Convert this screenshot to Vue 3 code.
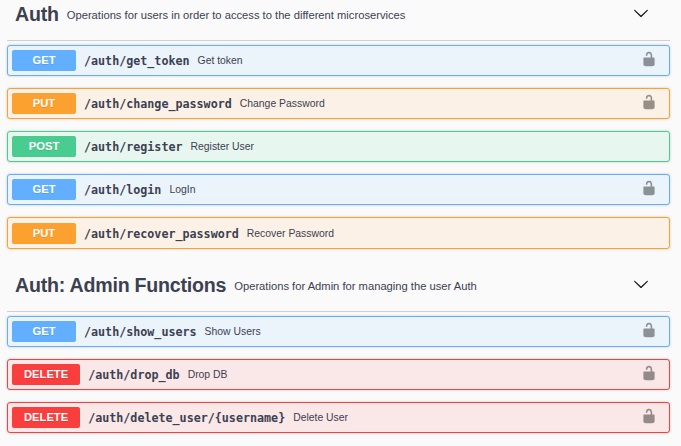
<script setup>
const sections = [
  {
    title: 'Auth',
    note: 'Operations for users in order to access to the different microservices',
    ops: [
      { method: 'get', path: '/auth/get_token', text: 'Get token', lock: true },
      { method: 'put', path: '/auth/change_password', text: 'Change Password', lock: true },
      { method: 'post', path: '/auth/register', text: 'Register User', lock: false },
      { method: 'get', path: '/auth/login', text: 'LogIn', lock: true },
      { method: 'put', path: '/auth/recover_password', text: 'Recover Password', lock: false },
    ],
  },
  {
    title: 'Auth: Admin Functions',
    note: 'Operations for Admin for managing the user Auth',
    ops: [
      { method: 'get', path: '/auth/show_users', text: 'Show Users', lock: true },
      { method: 'delete', path: '/auth/drop_db', text: 'Drop DB', lock: true },
      { method: 'delete', path: '/auth/delete_user/{username}', text: 'Delete User', lock: true },
    ],
  },
]
</script>

<template>
  <main class="page">
    <section v-for="s in sections" :key="s.title" class="section">
      <header class="head">
        <h3 class="title">{{ s.title }}</h3>
        <p class="note">{{ s.note }}</p>
        <svg class="chevron" viewBox="0 0 20 20"><path d="M17.418 6.109c.272-.268.709-.268.979 0s.271.701 0 .969l-7.908 7.83c-.27.268-.707.268-.979 0l-7.908-7.83c-.27-.268-.27-.701 0-.969.271-.268.709-.268.979 0L10 13.25l7.418-7.141z" /></svg>
      </header>
      <div class="list">
        <div v-for="o in s.ops" :key="o.path" class="op" :class="o.method">
          <span class="method">{{ o.method.toUpperCase() }}</span>
          <span class="path">{{ o.path }}</span>
          <span class="text">{{ o.text }}</span>
          <svg v-if="o.lock" class="lock" viewBox="0 0 20 20"><path d="M15.8 8H14V5.6C14 2.703 12.665 1 10 1 7.334 1 6 2.703 6 5.6V6h2v-.801C8 3.754 8.797 3 10 3c1.203 0 2 .754 2 2.199V8H4c-.553 0-1 .646-1 1.199V17c0 .549.428 1.139.951 1.307l1.197.387C5.672 18.861 6.55 19 7.1 19h5.8c.549 0 1.428-.139 1.951-.307l1.196-.387c.524-.167.953-.757.953-1.306V9.199C17 8.646 16.352 8 15.8 8z" /></svg>
        </div>
      </div>
    </section>
  </main>
</template>

<style>
body {
  background: #fafafa;
}
</style>

<style scoped>
.page {
  box-sizing: border-box;
  height: 446px;
  overflow: hidden;
  padding: 0 11px 0 7px;
  font-family: "Liberation Sans", Arial, sans-serif;
  color: #3b4151;
}
.head {
  box-sizing: border-box;
  display: flex;
  align-items: center;
  height: 41px;
  padding: 0 21px 12px 8px;
  border-bottom: 1px solid #cfd0d2;
}
.section + .section .head {
  height: 63px;
  padding-top: 22px;
}
.title {
  margin: 0;
  font-size: 19.6px;
  letter-spacing: -0.22px;
  line-height: 28px;
  font-weight: 700;
  white-space: nowrap;
}
.note {
  flex: 1;
  margin: 2px 0 0;
  padding-left: 8px;
  font-size: 11.2px;
  white-space: nowrap;
}
.chevron {
  width: 16px;
  height: 16px;
  margin-top: -2px;
  fill: #111;
}
.list {
  display: flex;
  flex-direction: column;
  gap: 12px;
  padding-top: 4px;
}
.op {
  box-sizing: border-box;
  display: flex;
  align-items: center;
  height: 31px;
  padding: 0 12px 0 4px;
  border: 1px solid;
  border-radius: 3px;
  box-shadow: 0 0 3px rgba(0, 0, 0, 0.19);
}
.section:first-child .op:last-child {
  height: 32px;
}
.method {
  box-sizing: border-box;
  min-width: 64px;
  height: 21px;
  padding: 0 12px;
  border-radius: 2px;
  color: #fff;
  font-size: 11.2px;
  font-weight: 700;
  line-height: 21px;
  text-align: center;
  text-shadow: 0 1px 0 rgba(0, 0, 0, 0.1);
}
.path {
  padding: 1px 8px 0;
  font-family: "DejaVu Sans Mono", monospace;
  font-size: 11.7px;
  font-weight: 700;
}
.text {
  flex: 1;
  font-size: 10.4px;
}
.lock {
  width: 16px;
  height: 16px;
  margin-top: -3px;
  opacity: 0.4;
  fill: #000;
}
.get { border-color: #61affe; background: #ebf3fb; }
.get .method { background: #61affe; }
.put { border-color: #fca130; background: #fbf1e6; }
.put .method { background: #fca130; }
.post { border-color: #49cc90; background: #e8f6f0; }
.post .method { background: #49cc90; }
.delete { border-color: #f93e3e; background: #fae7e7; }
.delete .method { background: #f93e3e; }
</style>
